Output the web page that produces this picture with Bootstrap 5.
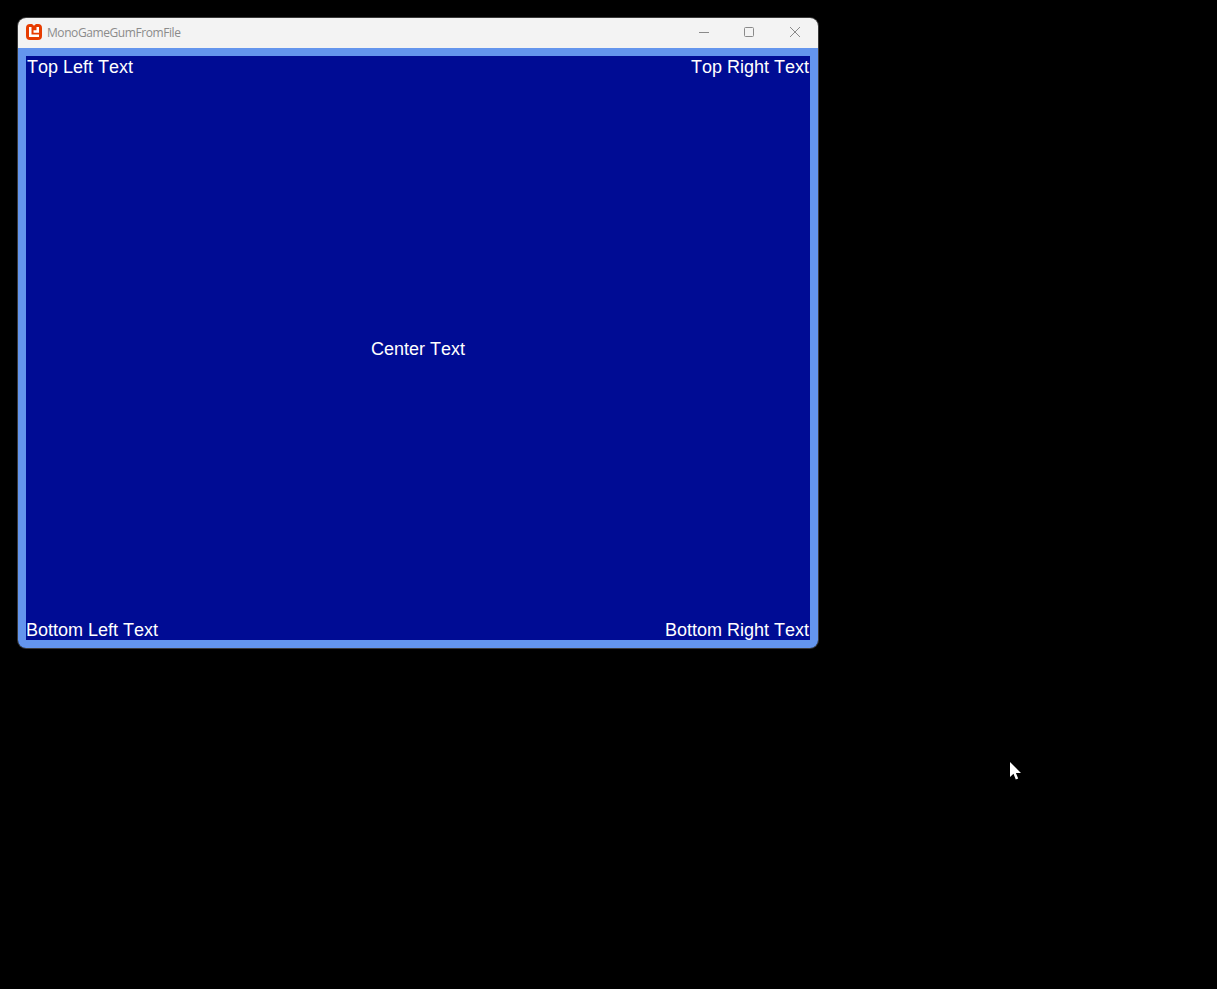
<!DOCTYPE html>
<html lang="en">
<head>
<meta charset="utf-8">
<title>MonoGameGumFromFile</title>
<link href="https://cdn.jsdelivr.net/npm/bootstrap@5.3.0/dist/css/bootstrap.min.css" rel="stylesheet">
<style>
html, body { height: 100%; background: #000; }
body { padding: 18px; overflow: hidden; position: relative; font-family: "Liberation Sans", Arial, sans-serif; }
.app-window { width: 800px; height: 630px; border-radius: 8px; overflow: hidden; box-shadow: 0 0 0 1px #3a3a3a; }
.app-titlebar { height: 30px; background: #f3f3f3; padding: 0 0 2px 8px; }
.app-title { font-family: "Open Sans", "Noto Sans", sans-serif; font-size: 12px; color: #8b8b8b; margin: 2px 0 0 5px; letter-spacing: -.42px; }
.app-ctl { width: 46px; height: 28px; display: flex; align-items: center; justify-content: center; }
.app-ctl:first-child { width: 44px; }
.app-backdrop { height: 600px; background: #6495ed; padding: 8px; }
.app-stage { height: 584px; background: #000c94; color: #fff; font-size: 18px; line-height: 21px; font-kerning: none; display: grid; grid-template-rows: 1fr auto 1fr; }
.stage-row { display: flex; justify-content: space-between; padding-right: 1px; }
.stage-top { align-items: flex-start; padding-left: 1px; padding-top: 1px; }
.stage-mid { justify-content: center; padding: 2px 0 0; }
.stage-bot { align-items: flex-end; line-height: 19px; }
.cursor-mark { position: absolute; left: 1010px; top: 762px; }
</style>
</head>
<body>
<div class="app-window d-flex flex-column">
  <div class="app-titlebar d-flex align-items-center">
    <svg width="16" height="16" viewBox="0 0 16 16">
      <path fill="#e73c00" d="M4 0h2l2 1.800L10 0h2a4 4 0 0 1 4 4v8a4 4 0 0 1-4 4H4a4 4 0 0 1-4-4V4a4 4 0 0 1 4-4z"/>
      <path fill="#fff" d="M3 3h2.500v7.500H13V13H3zM7.500 6.200h3V3H13v5.800H7.500z"/>
    </svg>
    <span class="app-title">MonoGameGumFromFile</span>
    <div class="d-flex ms-auto">
      <div class="app-ctl"><svg width="10" height="10" viewBox="0 0 10 10"><path d="M0 5.500h10" stroke="#8a8a8a" fill="none"/></svg></div>
      <div class="app-ctl"><svg width="10" height="10" viewBox="0 0 10 10"><rect x=".5" y=".5" width="9" height="9" rx="1" stroke="#8a8a8a" fill="none"/></svg></div>
      <div class="app-ctl"><svg width="10" height="10" viewBox="0 0 10 10"><path d="M0 0l10 10M10 0L0 10" stroke="#8a8a8a" fill="none"/></svg></div>
    </div>
  </div>
  <div class="app-backdrop">
    <div class="app-stage">
      <div class="stage-row stage-top"><span>Top Left Text</span><span>Top Right Text</span></div>
      <div class="stage-row stage-mid"><span>Center Text</span></div>
      <div class="stage-row stage-bot"><span>Bottom Left Text</span><span>Bottom Right Text</span></div>
    </div>
  </div>
</div>
<svg class="cursor-mark" width="12" height="19" viewBox="0 0 12 19"><path fill="#fff" d="M0 0v15l3.500-3.300 2.300 5.800 2.400-1-2.300-5.500H11z"/></svg>
<script src="https://cdn.jsdelivr.net/npm/bootstrap@5.3.0/dist/js/bootstrap.bundle.min.js"></script>
</body>
</html>
